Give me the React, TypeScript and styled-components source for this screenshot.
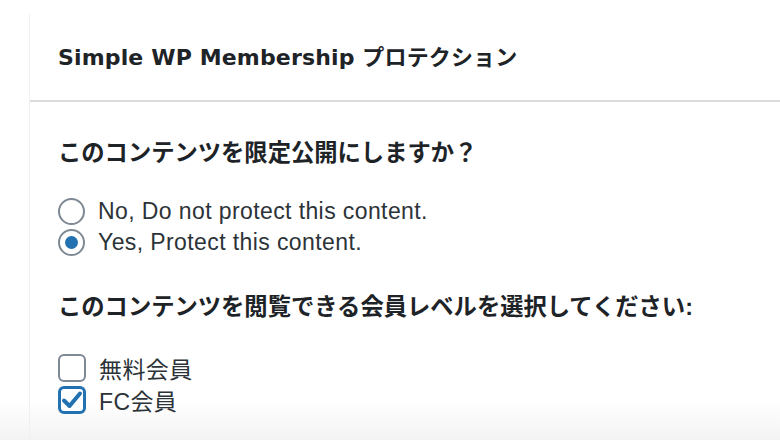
import React from 'react';
import styled, { createGlobalStyle } from 'styled-components';

const GlobalStyle = createGlobalStyle`
  html, body {
    margin: 0;
    padding: 0;
  }
  body {
    width: 780px;
    height: 440px;
    overflow: hidden;
    background: linear-gradient(to bottom, #ffffff 0%, #ffffff 91%, #f3f3f3 100%);
    font-family: "Liberation Sans", "Noto Sans CJK JP", sans-serif;
    color: #2c3338;
  }
`;

const Page = styled.div`
  padding: 14px 0 0 29px;
  height: 426px;
`;

const Metabox = styled.section`
  height: 100%;
  border-left: 1px solid #f0f0f1;
  display: flex;
  flex-direction: column;
`;

const Header = styled.div`
  height: 86px;
  display: flex;
  align-items: center;
  padding-left: 28px;
  border-bottom: 2px solid #dcdcde;
`;

const Title = styled.h2`
  margin: 0 0 4px;
  font-family: "DejaVu Sans", "Noto Sans CJK JP", sans-serif;
  font-size: 22px;
  font-weight: 700;
  color: #1d2327;
  letter-spacing: 0.15px;
`;

const Inside = styled.div`
  padding: 36px 0 0 28px;
  display: flex;
  flex-direction: column;
`;

const Question = styled.p<{ $gap: number }>`
  margin: 0 0 ${p => p.$gap}px;
  font-size: 23.3px;
  line-height: 30px;
  font-weight: 700;
  color: #1d2327;
`;

const Options = styled.div<{ $after?: number }>`
  display: flex;
  flex-direction: column;
  margin-bottom: ${p => p.$after || 0}px;
`;

const Row = styled.label<{ $h: number }>`
  display: flex;
  align-items: center;
  height: ${p => p.$h}px;
  gap: 13px;
  font-size: 23px;
  letter-spacing: 0.4px;
  color: #2c3338;
`;

const Radio = styled.span<{ $on?: boolean }>`
  box-sizing: border-box;
  width: 27px;
  height: 27px;
  border-radius: 50%;
  border: 2px solid #7e8993;
  background: #fff;
  display: flex;
  align-items: center;
  justify-content: center;
  flex-shrink: 0;
  &::after {
    content: '';
    display: ${p => (p.$on ? 'block' : 'none')};
    width: 13px;
    height: 13px;
    border-radius: 50%;
    background: #2271b1;
  }
`;

const Check = styled.span<{ $on?: boolean }>`
  box-sizing: border-box;
  width: 28px;
  height: 28px;
  border-radius: 6px;
  border: ${p => (p.$on ? '3px solid #2271b1' : '2px solid #7e8993')};
  background: #fff;
  display: flex;
  align-items: center;
  justify-content: center;
  flex-shrink: 0;
  color: #2271b1;
`;

const Tick = () => (
  <svg width="22" height="20" viewBox="0 0 22 20">
    <path d="M3 10.5 L8.5 16 L19 3.5" fill="none" stroke="currentColor" strokeWidth="4" strokeLinecap="round" strokeLinejoin="round" />
  </svg>
);

const levels = [
  { name: '無料会員', on: false },
  { name: 'FC会員', on: true },
];

export default function App() {
  return (
    <>
      <GlobalStyle />
      <Page>
        <Metabox>
          <Header>
            <Title>Simple WP Membership プロテクション</Title>
          </Header>
          <Inside>
            <Question $gap={28}>このコンテンツを限定公開にしますか？</Question>
            <Options $after={34}>
              <Row $h={31}>
                <Radio />
                No, Do not protect this content.
              </Row>
              <Row $h={31}>
                <Radio $on />
                Yes, Protect this content.
              </Row>
            </Options>
            <Question $gap={30}>このコンテンツを閲覧できる会員レベルを選択してください:</Question>
            <Options>
              {levels.map(l => (
                <Row $h={32} key={l.name}>
                  <Check $on={l.on}>{l.on && <Tick />}</Check>
                  {l.name}
                </Row>
              ))}
            </Options>
          </Inside>
        </Metabox>
      </Page>
    </>
  );
}
